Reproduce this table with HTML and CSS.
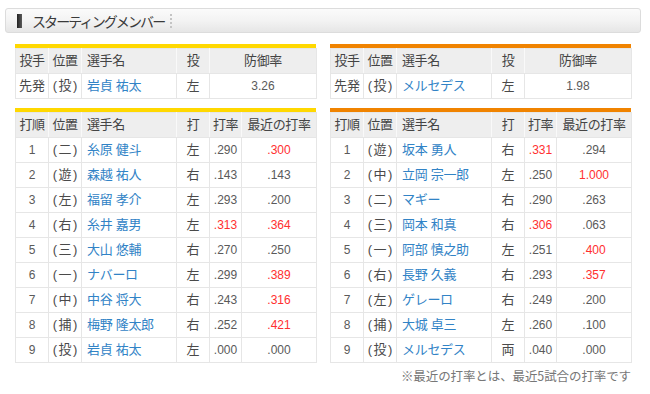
FILE: index.html
```html
<!DOCTYPE html>
<html lang="ja">
<head>
<meta charset="utf-8">
<title>スターティングメンバー</title>
<link rel="stylesheet" href="styles.css">
</head>
<body>
<div class="page">
  <div class="title-bar">
    <span class="title-mark"></span>
    <span class="title-text">スターティングメンバー</span>
    <span class="title-sep"></span>
  </div>

  <div class="teams">
    <div class="team team-yellow">
      <div class="tbl-wrap">
        <table class="tbl">
          <colgroup><col class="c1"><col class="c2"><col class="c3"><col class="c4"><col class="c5"><col class="c6"></colgroup>
          <tr><th>投手</th><th>位置</th><th class="name">選手名</th><th>投</th><th colspan="2">防御率</th></tr>
          <tr><td>先発</td><td class="pos">(投)</td><td class="name"><a>岩貞 祐太</a></td><td>左</td><td colspan="2" class="num">3.26</td></tr>
        </table>
      </div>
      <div class="tbl-wrap">
        <table class="tbl">
          <colgroup><col class="c1"><col class="c2"><col class="c3"><col class="c4"><col class="c5"><col class="c6"></colgroup>
          <tr><th>打順</th><th>位置</th><th class="name">選手名</th><th>打</th><th>打率</th><th>最近の打率</th></tr>
          <tr><td class="num">1</td><td class="pos">(二)</td><td class="name"><a>糸原 健斗</a></td><td>左</td><td class="num">.290</td><td class="num hot">.300</td></tr>
          <tr><td class="num">2</td><td class="pos">(遊)</td><td class="name"><a>森越 祐人</a></td><td>右</td><td class="num">.143</td><td class="num">.143</td></tr>
          <tr><td class="num">3</td><td class="pos">(左)</td><td class="name"><a>福留 孝介</a></td><td>左</td><td class="num">.293</td><td class="num">.200</td></tr>
          <tr><td class="num">4</td><td class="pos">(右)</td><td class="name"><a>糸井 嘉男</a></td><td>左</td><td class="num hot">.313</td><td class="num hot">.364</td></tr>
          <tr><td class="num">5</td><td class="pos">(三)</td><td class="name"><a>大山 悠輔</a></td><td>右</td><td class="num">.270</td><td class="num">.250</td></tr>
          <tr><td class="num">6</td><td class="pos">(一)</td><td class="name"><a>ナバーロ</a></td><td>左</td><td class="num">.299</td><td class="num hot">.389</td></tr>
          <tr><td class="num">7</td><td class="pos">(中)</td><td class="name"><a>中谷 将大</a></td><td>右</td><td class="num">.243</td><td class="num hot">.316</td></tr>
          <tr><td class="num">8</td><td class="pos">(捕)</td><td class="name"><a>梅野 隆太郎</a></td><td>右</td><td class="num">.252</td><td class="num hot">.421</td></tr>
          <tr><td class="num">9</td><td class="pos">(投)</td><td class="name"><a>岩貞 祐太</a></td><td>左</td><td class="num">.000</td><td class="num">.000</td></tr>
        </table>
      </div>
    </div>

    <div class="team team-orange">
      <div class="tbl-wrap">
        <table class="tbl">
          <colgroup><col class="c1"><col class="c2"><col class="c3"><col class="c4"><col class="c5"><col class="c6"></colgroup>
          <tr><th>投手</th><th>位置</th><th class="name">選手名</th><th>投</th><th colspan="2">防御率</th></tr>
          <tr><td>先発</td><td class="pos">(投)</td><td class="name"><a>メルセデス</a></td><td>左</td><td colspan="2" class="num">1.98</td></tr>
        </table>
      </div>
      <div class="tbl-wrap">
        <table class="tbl">
          <colgroup><col class="c1"><col class="c2"><col class="c3"><col class="c4"><col class="c5"><col class="c6"></colgroup>
          <tr><th>打順</th><th>位置</th><th class="name">選手名</th><th>打</th><th>打率</th><th>最近の打率</th></tr>
          <tr><td class="num">1</td><td class="pos">(遊)</td><td class="name"><a>坂本 勇人</a></td><td>右</td><td class="num hot">.331</td><td class="num">.294</td></tr>
          <tr><td class="num">2</td><td class="pos">(中)</td><td class="name"><a>立岡 宗一郎</a></td><td>左</td><td class="num">.250</td><td class="num hot">1.000</td></tr>
          <tr><td class="num">3</td><td class="pos">(二)</td><td class="name"><a>マギー</a></td><td>右</td><td class="num">.290</td><td class="num">.263</td></tr>
          <tr><td class="num">4</td><td class="pos">(三)</td><td class="name"><a>岡本 和真</a></td><td>右</td><td class="num hot">.306</td><td class="num">.063</td></tr>
          <tr><td class="num">5</td><td class="pos">(一)</td><td class="name"><a>阿部 慎之助</a></td><td>左</td><td class="num">.251</td><td class="num hot">.400</td></tr>
          <tr><td class="num">6</td><td class="pos">(右)</td><td class="name"><a>長野 久義</a></td><td>右</td><td class="num">.293</td><td class="num hot">.357</td></tr>
          <tr><td class="num">7</td><td class="pos">(左)</td><td class="name"><a>ゲレーロ</a></td><td>右</td><td class="num">.249</td><td class="num">.200</td></tr>
          <tr><td class="num">8</td><td class="pos">(捕)</td><td class="name"><a>大城 卓三</a></td><td>左</td><td class="num">.260</td><td class="num">.100</td></tr>
          <tr><td class="num">9</td><td class="pos">(投)</td><td class="name"><a>メルセデス</a></td><td>両</td><td class="num">.040</td><td class="num">.000</td></tr>
        </table>
      </div>
    </div>
  </div>

  <p class="note">※最近の打率とは、最近5試合の打率です</p>
</div>
</body>
</html>
```

FILE: styles.css
```css
html, body {
  margin: 0;
  padding: 0;
  background: #ffffff;
}

body {
  font-family: "Liberation Sans", "Noto Sans CJK JP", sans-serif;
  color: #444444;
  font-size: 13px;
}

.page {
  width: 650px;
  padding-top: 8px;
}

.title-bar {
  display: flex;
  align-items: center;
  height: 23px;
  margin: 0 9px 0 5px;
  border: 1px solid #dcdcdc;
  border-radius: 3px;
  background: linear-gradient(#fbfbfb 0%, #f3f3f3 50%, #e6e6e6 100%);
}

.title-mark {
  width: 5px;
  height: 14px;
  margin-left: 11px;
  background: linear-gradient(90deg, #222222, #5a5a5a);
}

.title-text {
  margin-left: 10px;
  font-family: "Noto Sans CJK JP", sans-serif;
  font-size: 14px;
  letter-spacing: -1.9px;
  color: #3a3a3a;
  line-height: 1;
}

.title-sep {
  width: 0;
  height: 14px;
  margin-left: 6px;
  border-left: 2px dotted #c4c4c4;
}

.teams {
  display: grid;
  grid-template-columns: 301px 301px;
  column-gap: 14px;
  margin: 11px 0 0 15px;
}

.team {
  display: flex;
  flex-direction: column;
  gap: 9px;
}

.team-yellow .tbl-wrap {
  border-top: 4px solid #ffd800;
}

.team-orange .tbl-wrap {
  border-top: 4px solid #f08300;
}

.tbl {
  width: 301px;
  border-collapse: collapse;
  table-layout: fixed;
}

.c1 { width: 33px; }
.c2 { width: 33px; }
.c3 { width: 95px; }
.c4 { width: 33px; }
.c5 { width: 32px; }
.c6 { width: 75px; }

.tbl tr {
  height: 25px;
}

.tbl th,
.tbl td {
  padding: 0;
  border: 1px solid #e6e6e6;
  text-align: center;
  font-weight: normal;
  white-space: nowrap;
  line-height: 16px;
}

.tbl th {
  background: #eeeeee;
  color: #444444;
  border-left-color: #f9f9f9;
  border-right-color: #f9f9f9;
  letter-spacing: -0.4px;
}

.tbl th:first-child {
  border-left-color: #e6e6e6;
}

.tbl th:last-child {
  border-right-color: #e6e6e6;
}

.tbl td {
  background: #ffffff;
  color: #4a4a4a;
}

.tbl .pos {
  letter-spacing: 1.5px;
  text-indent: 1.5px;
}

.tbl .name {
  text-align: left;
  padding-left: 5px;
}

.tbl .name a {
  color: #3183c6;
  text-decoration: none;
  letter-spacing: -0.3px;
}

.tbl .num {
  font-size: 12px;
  color: #5a5a5a;
}

.tbl .hot {
  color: #ff3030;
}

.note {
  margin: 4px 0 0 0;
  width: 631px;
  text-align: right;
  font-family: "Noto Sans CJK JP", sans-serif;
  font-size: 12.5px;
  color: #777777;
  letter-spacing: -0.1px;
  line-height: 18px;
}
```
